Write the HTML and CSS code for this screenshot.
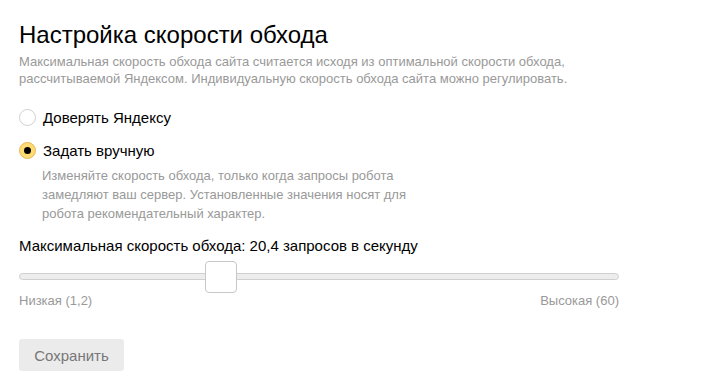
FILE: index.html
```html
<!DOCTYPE html>
<html lang="ru">
<head>
    <meta charset="UTF-8">
    <meta name="viewport" content="width=device-width, initial-scale=1.0">
    <title>Настройка скорости обхода</title>
    <link rel="stylesheet" href="styles.css">
</head>
<body>
    <div class="container">
        <h1>Настройка скорости обхода</h1>
        <p class="desc">Максимальная скорость обхода сайта считается исходя из оптимальной скорости обхода, рассчитываемой Яндексом. Индивидуальную скорость обхода сайта можно регулировать.</p>

        <div class="options">
            <label class="radio">
                <span class="circle"></span>
                <span class="radio-text">Доверять Яндексу</span>
            </label>
            <label class="radio checked">
                <span class="circle"></span>
                <span class="radio-text">Задать вручную</span>
            </label>
            <p class="hint">Изменяйте скорость обхода, только когда запросы робота замедляют ваш сервер. Установленные значения носят для робота рекомендательный характер.</p>
        </div>

        <div class="speed">
            <div class="speed-title">Максимальная скорость обхода: 20,4 запросов в секунду</div>
            <div class="slider">
                <div class="track"></div>
                <div class="thumb" style="left: 186px"></div>
            </div>
            <div class="limits">
                <span>Низкая (1,2)</span>
                <span>Высокая (60)</span>
            </div>
        </div>

        <button type="button" class="save">Сохранить</button>
    </div>
</body>
</html>
```

FILE: styles.css
```css
body {
    font-family: "Liberation Sans", Arial, sans-serif;
    background-color: #fff;
    color: #000;
    margin: 0;
    padding: 0;
}
.container {
    padding: 20px 19px 0;
    width: 600px;
}
h1 {
    font-size: 24px;
    font-weight: normal;
    margin: 0;
    line-height: 30px;
}
.desc {
    font-size: 13px;
    line-height: 17px;
    color: #999;
    margin: 3px 0 0;
    width: 560px;
}
.options {
    margin-top: 20px;
}
.radio {
    display: flex;
    align-items: center;
    height: 20px;
    font-size: 15px;
    margin-bottom: 13px;
}
.circle {
    width: 15px;
    height: 15px;
    border: 1px solid #d0d0d0;
    border-radius: 50%;
    background: #fff;
    margin-right: 7px;
    box-sizing: content-box;
    position: relative;
}
.radio.checked .circle {
    background: #ffdb74;
    border-color: #e3b954;
}
.radio.checked .circle::after {
    content: "";
    position: absolute;
    width: 7px;
    height: 7px;
    border-radius: 50%;
    background: #000;
    left: 4px;
    top: 4px;
}
.hint {
    font-size: 13px;
    line-height: 19px;
    color: #999;
    margin: -7px 0 0 23px;
    width: 380px;
}
.speed {
    margin-top: 13px;
}
.speed-title {
    font-size: 15px;
    line-height: 20px;
}
.slider {
    position: relative;
    height: 32px;
    margin-top: 5px;
}
.track {
    position: absolute;
    left: 0;
    right: 0;
    top: 12px;
    height: 5px;
    background: #ededed;
    border: 1px solid #cfcfcf;
    border-radius: 4px;
}
.thumb {
    position: absolute;
    top: 0;
    width: 30px;
    height: 30px;
    background: #fff;
    border: 1px solid #c8c8c8;
    border-radius: 4px;
}
.limits {
    display: flex;
    justify-content: space-between;
    font-size: 13px;
    color: #999;
    margin-top: -1px;
    line-height: 17px;
}
.save {
    margin-top: 30px;
    font-family: "Liberation Sans", Arial, sans-serif;
    font-size: 15px;
    color: #777;
    background: #ebebeb;
    border: none;
    border-radius: 3px;
    width: 105px;
    height: 32px;
    padding: 0;
}
```
